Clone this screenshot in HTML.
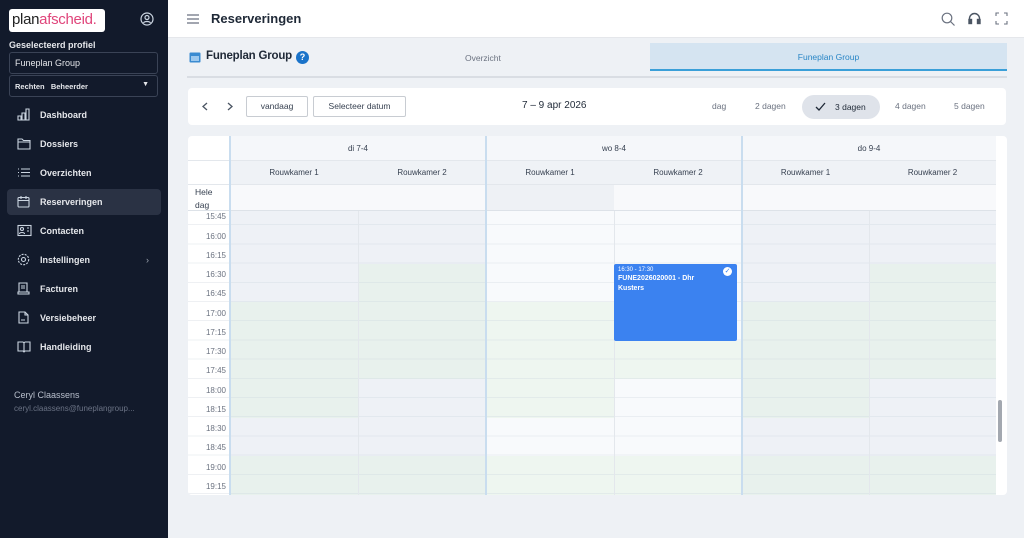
<!DOCTYPE html>
<html><head><meta charset="utf-8"><style>
*{box-sizing:border-box;margin:0;padding:0}
body{width:1024px;height:538px;overflow:hidden;background:#eef1f5;font-family:"Liberation Sans",sans-serif;position:relative;color:#1f2937}
.abs{position:absolute}
#sb{left:0;top:0;width:168px;height:538px;background:#121a2b;color:#e5e7eb}
.logo{left:9px;top:9px;width:96px;height:23px;background:#fff;border-radius:3px;font-size:15px;color:#222;padding:2px 3px;letter-spacing:-0.3px}
.logo span{color:#e0457b}
.nav{left:7px;width:154px;height:26px;font-size:9px;font-weight:bold;color:#e5e7eb;padding-left:33px;line-height:26px;border-radius:4px}
.nav svg{position:absolute;left:10px;top:6px}
.cell{position:absolute;font-size:8px;color:#374151;text-align:center}
.tl{position:absolute;left:0;width:38px;text-align:right;font-size:8px;color:#6b7280}
</style></head><body>
<div id="sb" class="abs">
 <div class="abs logo">plan<span>afscheid.</span></div>
 <svg class="abs" style="left:140px;top:12px" width="14" height="14" viewBox="0 0 14 14" fill="none" stroke="#cbd5e1" stroke-width="1.2"><circle cx="7" cy="7" r="6"/><circle cx="7" cy="5.5" r="2"/><path d="M3.5 11c1-2 6-2 7 0"/></svg>
 <div class="abs" style="left:9px;top:40px;font-size:9px;font-weight:bold">Geselecteerd profiel</div>
 <div class="abs" style="left:9px;top:52px;width:149px;height:22px;border:1px solid #3a4356;border-radius:3px;font-size:9px;padding:5px 5px">Funeplan Group</div>
 <div class="abs" style="left:9px;top:75px;width:149px;height:22px;border:1px solid #3a4356;border-radius:3px;font-size:7.5px;font-weight:bold;padding:6px 5px">Rechten &nbsp; Beheerder<span style="position:absolute;right:8px;top:5px;font-size:7px">▼</span></div>
 <div class="abs nav" style="top:102px"><svg width="13" height="13" fill="none" stroke="#cbd5e1" stroke-width="1.1"><path d="M1 12V8h3v4zM5 12V5h3v7zM9 12V1h3v11z"/></svg>Dashboard</div>
 <div class="abs nav" style="top:131px"><svg width="14" height="13" fill="none" stroke="#cbd5e1" stroke-width="1.1"><path d="M1 2h4l1.5 1.5H13V12H1z M1 5h12"/></svg>Dossiers</div>
 <div class="abs nav" style="top:160px"><svg width="13" height="13" fill="none" stroke="#cbd5e1" stroke-width="1.1"><path d="M1 3h1M4 3h9M1 6.5h1M4 6.5h9M1 10h1M4 10h9"/></svg>Overzichten</div>
 <div class="abs nav" style="top:189px;background:#2a3244"><svg width="13" height="13" fill="none" stroke="#cbd5e1" stroke-width="1.1"><rect x="1" y="2.5" width="11" height="9.5" rx="1"/><path d="M1 5.5h11M4 1v3M9 1v3"/></svg>Reserveringen</div>
 <div class="abs nav" style="top:218px"><svg width="15" height="13" fill="none" stroke="#cbd5e1" stroke-width="1.1"><rect x="1" y="1.5" width="13" height="10"/><circle cx="5" cy="5" r="1.5"/><path d="M2.5 10c0-2 5-2 5 0M10 4h2M10 7h2"/></svg>Contacten</div>
 <div class="abs nav" style="top:247px"><svg width="13" height="13" fill="none" stroke="#cbd5e1" stroke-width="1.1"><circle cx="6.5" cy="6.5" r="2"/><circle cx="6.5" cy="6.5" r="5.2" stroke-dasharray="2 1.2"/></svg>Instellingen<span style="position:absolute;right:12px;color:#9ca3af;font-weight:normal">›</span></div>
 <div class="abs nav" style="top:276px"><svg width="13" height="13" fill="none" stroke="#cbd5e1" stroke-width="1.1"><path d="M2 1h8v9H2zM1 10h11v2H1zM4 4h4M4 6h4"/></svg>Facturen</div>
 <div class="abs nav" style="top:305px"><svg width="13" height="13" fill="none" stroke="#cbd5e1" stroke-width="1.1"><path d="M2 1h6l3 3v8H2zM8 1v3h3M4 9h4"/></svg>Versiebeheer</div>
 <div class="abs nav" style="top:334px"><svg width="14" height="13" fill="none" stroke="#cbd5e1" stroke-width="1.1"><path d="M1 2h5l1 1 1-1h5v9H8l-1 1-1-1H1zM7 3v9"/></svg>Handleiding</div>
 <div class="abs" style="left:14px;top:390px;font-size:9px;color:#b8bfcc">Ceryl Claassens</div>
 <div class="abs" style="left:14px;top:404px;font-size:8px;color:#6b7385">ceryl.claassens@funeplangroup...</div>
</div>

<div class="abs" style="left:168px;top:0;width:856px;height:38px;background:#fff;border-bottom:1px solid #e5e7eb"></div>
<svg class="abs" style="left:187px;top:14px" width="12" height="10" stroke="#6b7280" stroke-width="1.2"><path d="M0 1h12M0 5h12M0 9h12"/></svg>
<div class="abs" style="left:211px;top:11px;font-size:13px;font-weight:bold;color:#1f2937">Reserveringen</div>
<svg class="abs" style="left:941px;top:12px" width="14" height="14" fill="none" stroke="#6b7280" stroke-width="1.2"><circle cx="6" cy="6" r="4.8"/><path d="M9.5 9.5l4 4"/></svg>
<svg class="abs" style="left:968px;top:12px" width="13" height="13" fill="none" stroke="#4b5563" stroke-width="1.4"><path d="M1.5 10V6.5a5 5 0 0110 0V10"/><rect x="1" y="7.5" width="2.5" height="4" fill="#4b5563"/><rect x="9.5" y="7.5" width="2.5" height="4" fill="#4b5563"/></svg>
<svg class="abs" style="left:995px;top:12px" width="13" height="13" fill="none" stroke="#6b7280" stroke-width="1.1"><path d="M1 4V1h3M9 1h3v3M12 9v3H9M4 12H1V9"/></svg>

<svg class="abs" style="left:189px;top:51px" width="12" height="12"><rect x="0.5" y="1.5" width="11" height="10" rx="1" fill="#3a8bd1"/><rect x="2" y="5" width="8" height="5" fill="#9cc8ee"/></svg>
<div class="abs" style="left:206px;top:50px;font-size:11.5px;font-weight:bold;color:#1f2937;letter-spacing:-0.2px">Funeplan Group</div>
<div class="abs" style="left:296px;top:51px;width:13px;height:13px;border-radius:50%;background:#1a73c9;color:#fff;font-size:9px;font-weight:bold;text-align:center;line-height:13px">?</div>
<div class="abs" style="left:465px;top:53px;font-size:8.5px;color:#6b7280">Overzicht</div>
<div class="abs" style="left:650px;top:43px;width:357px;height:28px;background:#d5e4f1;border-bottom:2px solid #3a9fd8;font-size:8.5px;color:#2a86c6;text-align:center;line-height:28px">Funeplan Group</div>
<div class="abs" style="left:187px;top:76px;width:820px;height:2px;background:#d9dde3"></div>

<div class="abs" style="left:188px;top:88px;width:818px;height:37px;background:#fff;border-radius:4px"></div>
<svg class="abs" style="left:201px;top:102px" width="8" height="9" fill="none" stroke="#4b5563" stroke-width="1.3"><path d="M6 1L2 4.5 6 8"/></svg>
<svg class="abs" style="left:226px;top:102px" width="8" height="9" fill="none" stroke="#4b5563" stroke-width="1.3"><path d="M2 1l4 3.5L2 8"/></svg>
<div class="abs" style="left:246px;top:96px;width:62px;height:21px;border:1px solid #c8ccd2;border-radius:2px;font-size:8.5px;color:#374151;text-align:center;line-height:19px">vandaag</div>
<div class="abs" style="left:313px;top:96px;width:93px;height:21px;border:1px solid #c8ccd2;border-radius:2px;font-size:8.5px;color:#374151;text-align:center;line-height:19px">Selecteer datum</div>
<div class="abs" style="left:522px;top:100px;font-size:10px;color:#1f2937">7 – 9 apr 2026</div>
<div class="abs" style="left:712px;top:101px;font-size:8.5px;color:#6b7280">dag</div>
<div class="abs" style="left:755px;top:101px;font-size:8.5px;color:#6b7280">2 dagen</div>
<div class="abs" style="left:802px;top:95px;width:78px;height:24px;border-radius:12px;background:#dfe3ea;font-size:8.5px;color:#1f2937;line-height:24px;padding-left:33px">3 dagen</div>
<svg class="abs" style="left:815px;top:102px" width="11" height="9" fill="none" stroke="#1f2937" stroke-width="1.3"><path d="M1 5l3 3 6-7"/></svg>
<div class="abs" style="left:895px;top:101px;font-size:8.5px;color:#6b7280">4 dagen</div>
<div class="abs" style="left:954px;top:101px;font-size:8.5px;color:#6b7280">5 dagen</div>

<div class="abs" style="left:188px;top:136px;width:819px;height:359px;background:#fff;border-radius:4px;overflow:hidden">
 <div class="abs" style="left:42px;top:0;width:766px;height:24px;background:#f5f7fa"></div>
 <div class="abs" style="left:42px;top:24px;width:766px;height:24px;background:#eff2f6"></div>
 <div class="abs" style="left:42px;top:48px;width:766px;height:27px;background:#f8f9fb"></div>
 <div class="abs" style="left:298px;top:48px;width:128px;height:27px;background:#eef1f5"></div>
 <div class="cell" style="left:42px;top:8px;width:256px;">di 7-4</div>
 <div class="cell" style="left:298px;top:8px;width:256px;">wo 8-4</div>
 <div class="cell" style="left:554px;top:8px;width:254px;">do 9-4</div>
 <div class="cell" style="left:42px;top:32px;width:128px">Rouwkamer 1</div><div class="cell" style="left:170px;top:32px;width:128px">Rouwkamer 2</div>
 <div class="cell" style="left:298px;top:32px;width:128px">Rouwkamer 1</div><div class="cell" style="left:426px;top:32px;width:128px">Rouwkamer 2</div>
 <div class="cell" style="left:554px;top:32px;width:127px">Rouwkamer 1</div><div class="cell" style="left:681px;top:32px;width:127px">Rouwkamer 2</div>
 <div class="abs" style="left:7px;top:50px;font-size:8.5px;line-height:13px;color:#374151">Hele<br>dag</div>
 <div class="abs" style="left:0;top:24px;width:808px;height:1px;background:#e3e7ec"></div>
 <div class="abs" style="left:0;top:48px;width:808px;height:1px;background:#e3e7ec"></div>
 <div class="abs" style="left:0;top:74px;width:808px;height:1px;background:#dde2e8"></div>
 <div class="abs" style="left:0;top:75px;width:808px;height:284px;overflow:hidden">
  <div class="abs" style="left:42px;top:0;width:128px;height:284px;background:linear-gradient(#eef1f6 0 91px,#e8f1ed 91px 207px,#eef1f6 207px 245px,#e8f1ed 245px)"></div>
  <div class="abs" style="left:170px;top:0;width:128px;height:284px;background:linear-gradient(#eef1f6 0 53px,#e8f1ed 53px 168px,#eef1f6 168px 245px,#e8f1ed 245px)"></div>
  <div class="abs" style="left:298px;top:0;width:128px;height:284px;background:linear-gradient(#f8fafc 0 91px,#eef6f0 91px 207px,#f8fafc 207px 245px,#eef6f0 245px)"></div>
  <div class="abs" style="left:426px;top:0;width:128px;height:284px;background:linear-gradient(#f8fafc 0 130px,#eef6f0 130px 168px,#f8fafc 168px 245px,#eef6f0 245px)"></div>
  <div class="abs" style="left:554px;top:0;width:127px;height:284px;background:linear-gradient(#eef1f6 0 91px,#e8f1ed 91px 207px,#eef1f6 207px 245px,#e8f1ed 245px)"></div>
  <div class="abs" style="left:681px;top:0;width:127px;height:284px;background:linear-gradient(#eef1f6 0 53px,#e8f1ed 53px 168px,#eef1f6 168px 245px,#e8f1ed 245px)"></div>
  <div class="abs" style="left:0;top:-4.6px;width:808px;height:300px;background:repeating-linear-gradient(to bottom,transparent 0 18.2px,rgba(200,210,220,.3) 18.2px 19.2px)"></div>
  <div class="abs" style="left:169.5px;top:0;width:1px;height:284px;background:#e3e7ec"></div>
  <div class="abs" style="left:425.5px;top:0;width:1px;height:284px;background:#e3e7ec"></div>
  <div class="abs" style="left:680.5px;top:0;width:1px;height:284px;background:#e3e7ec"></div>
  <div class="abs" style="left:0;top:0;width:42px;height:284px;background:#fff"></div>
  <div class="abs" style="left:0;top:-4.6px;width:42px;height:300px;background:repeating-linear-gradient(to bottom,transparent 0 18.2px,#eef0f3 18.2px 19.2px)"></div>
  <div class="tl" style="top:1px">15:45</div><div class="tl" style="top:21px">16:00</div><div class="tl" style="top:40px">16:15</div><div class="tl" style="top:59px">16:30</div><div class="tl" style="top:78px">16:45</div><div class="tl" style="top:98px">17:00</div><div class="tl" style="top:117px">17:15</div><div class="tl" style="top:136px">17:30</div><div class="tl" style="top:155px">17:45</div><div class="tl" style="top:175px">18:00</div><div class="tl" style="top:194px">18:15</div><div class="tl" style="top:213px">18:30</div><div class="tl" style="top:232px">18:45</div><div class="tl" style="top:252px">19:00</div><div class="tl" style="top:271px">19:15</div>
  <div class="abs" style="left:426px;top:53px;width:123px;height:77px;background:#3b82f0;border-radius:2px;color:#fff;padding:3px 4px">
   <div style="font-size:6px">16:30 - 17:30</div>
   <div style="font-size:7px;font-weight:bold;line-height:10px;margin-top:1px">FUNE2026020001 - Dhr<br>Kusters</div>
   <div class="abs" style="right:5px;top:3px;width:9px;height:9px;border-radius:50%;background:#fff;color:#3b82f0;font-size:7px;line-height:9px;text-align:center">✓</div>
  </div>
 </div>
 <div class="abs" style="left:41px;top:0;width:2px;height:359px;background:#c9ddef"></div>
 <div class="abs" style="left:297px;top:0;width:2px;height:359px;background:#c9ddef"></div>
 <div class="abs" style="left:553px;top:0;width:2px;height:359px;background:#c9ddef"></div>
 <div class="abs" style="left:810px;top:264px;width:4px;height:42px;border-radius:2px;background:#a3a8b0"></div>
</div>
</body></html>
